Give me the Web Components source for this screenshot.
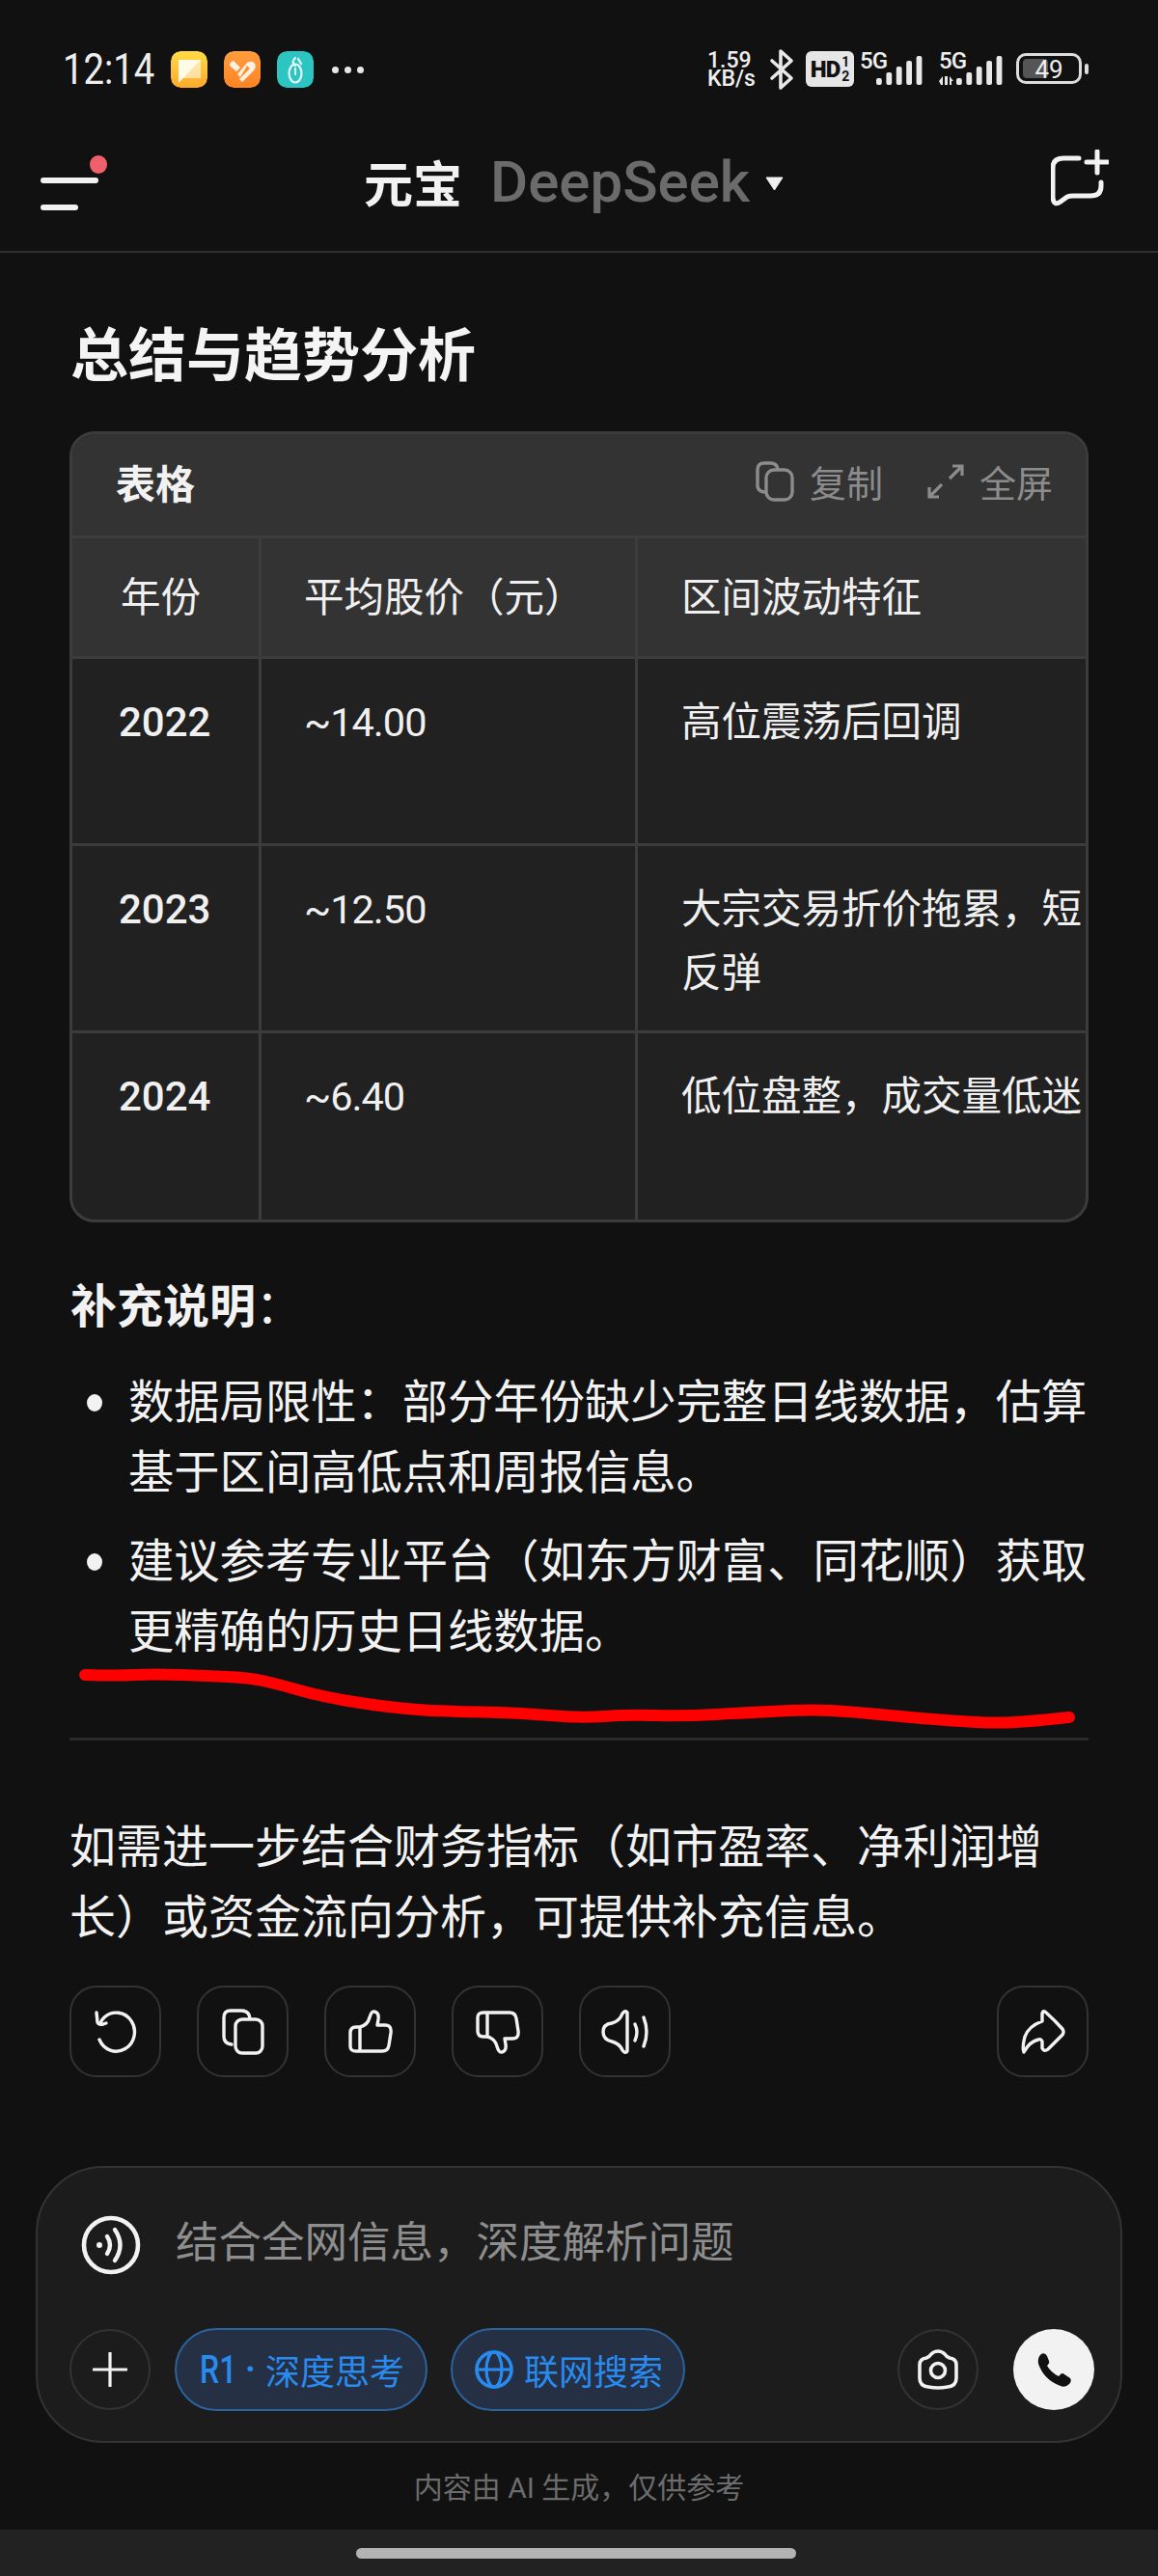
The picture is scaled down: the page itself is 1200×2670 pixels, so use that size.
<!DOCTYPE html>
<html lang="zh">
<head>
<meta charset="utf-8">
<title>元宝 DeepSeek</title>
<style>
  html, body { margin: 0; padding: 0; background: #111; }
  body {
    width: 1200px; height: 2670px; overflow: hidden; position: relative;
    font-family: Roboto, "Noto Sans CJK SC", sans-serif; color: #f2f2f2;
  }
  yb-main { display: block; }
</style>
</head>
<body>
<yb-status-bar></yb-status-bar>
<yb-top-nav></yb-top-nav>
<yb-main>
  <yb-heading>总结与趋势分析</yb-heading>
  <yb-data-table></yb-data-table>
  <yb-note-title><b>补充说明</b>：</yb-note-title>
  <yb-bullet>数据局限性：部分年份缺少完整日线数据，估算基于区间高低点和周报信息。</yb-bullet>
  <yb-bullet>建议参考专业平台（如东方财富、同花顺）获取更精确的历史日线数据。</yb-bullet>
  <yb-divider></yb-divider>
  <yb-para>如需进一步结合财务指标（如市盈率、净利润增长）或资金流向分析，可提供补充信息。</yb-para>
  <yb-actions></yb-actions>
</yb-main>
<yb-composer></yb-composer>
<yb-home-bar></yb-home-bar>
<yb-scribble></yb-scribble>

<script>
const FONT = 'Roboto, "Noto Sans CJK SC", sans-serif';

class YbElement extends HTMLElement {
  constructor() {
    super();
    this.attachShadow({ mode: 'open' });
  }
  render(css, html) {
    this.shadowRoot.innerHTML = `<style>${css}</style>${html}`;
  }
}

function bars(x0) {
  const hs = [7, 13, 19, 25, 30];
  return hs.map((h, i) => `<rect x="${x0 + i * 10.4}" y="${31 - h}" width="5.8" height="${h}" rx="2" fill="#e8e8e8"/>`).join('');
}

class YbStatusBar extends YbElement {
  connectedCallback() {
    this.render(`
      :host { display: flex; height: 124px; box-sizing: border-box; padding: 53px 72px 0 65px; justify-content: space-between; color: #eee; font-family: ${FONT}; }
      .left, .right { display: flex; align-items: flex-start; }
      .time { font-size: 44px; line-height: 38px; width: 92px; transform: scaleX(.87); transform-origin: left; white-space: nowrap; }
      .app { width: 38px; height: 38px; border-radius: 10px; margin-left: 17px; display: block; }
      .app.first { margin-left: 20px; }
      .dots { display: flex; gap: 6px; margin: 16px 0 0 19px; }
      .dots i { width: 7px; height: 7px; border-radius: 50%; background: #e8e8e8; }
      .speed { font-size: 23px; font-weight: 500; line-height: 19px; width: 54px; white-space: pre-line; }
      .bt { display: block; margin: -3px 0 0 10px; }
      .hd { margin-left: 12px; width: 50px; height: 37px; border-radius: 6px; background: #e6e6e6; color: #111; display: flex; align-items: center; justify-content: center; font-weight: 900; font-size: 24px; letter-spacing: -1px; }
      .hd small { font-size: 14px; line-height: 15px; display: block; text-align: center; margin-left: 2px; font-weight: 700; letter-spacing: 0; }
      .sig { position: relative; width: 66px; height: 37px; margin-left: 6px; }
      .sig.b { margin-left: 16px; }
      .sig b { position: absolute; left: 0; top: 0; font-size: 24px; line-height: 20px; font-weight: 500; letter-spacing: -1px; }
      .sig svg { position: absolute; left: 0; top: 4px; display: block; }
      .bat { position: relative; margin: 2px 0 0 14px; width: 68px; height: 32px; box-sizing: border-box; border: 3px solid #ddd; border-radius: 10px; }
      .bat i { position: absolute; left: 4px; top: 3px; bottom: 3px; width: 26px; background: #555; border-radius: 4px; }
      .bat span { position: absolute; left: 0; right: 0; top: -2px; text-align: center; font-size: 26px; line-height: 32px; }
      .tip { width: 4px; height: 11px; margin: 13px 0 0 3px; background: #ddd; border-radius: 2px; }
    `, `
      <div class="left">
        <div class="time">12:14</div>
        <svg class="app first" viewBox="0 0 38 38"><defs><linearGradient id="y" x1="0" y1="0" x2="0" y2="1"><stop offset="0" stop-color="#ffdb45"/><stop offset="1" stop-color="#ffa92c"/></linearGradient></defs><rect width="38" height="38" rx="10" fill="url(#y)"/><rect x="8" y="9" width="23" height="19" fill="#fff" opacity=".55"/><path d="M8 9h23L8 33z" fill="#fffbe6"/></svg>
        <svg class="app" viewBox="0 0 38 38"><defs><linearGradient id="o" x1="0" y1="0" x2="0" y2="1"><stop offset="0" stop-color="#ff9d3e"/><stop offset="1" stop-color="#ff8424"/></linearGradient></defs><rect width="38" height="38" rx="10" fill="url(#o)"/><path d="M6 15Q6 11 10 10L17 17 13 21zM14 24L24 12Q29 9 32 13Q34 16 31 20L19 32 16 29 27 18 24 15 17 27z" fill="#fff2e2"/></svg>
        <svg class="app" viewBox="0 0 38 38"><rect width="38" height="38" rx="10" fill="#2cc5c2"/><ellipse cx="19" cy="23" rx="6.5" ry="9.5" fill="none" stroke="#e8fbfa" stroke-width="2.2"/><path d="M19 15c-4-3-2-6 0-8M19 18v6M22 8l3 5" fill="none" stroke="#e8fbfa" stroke-width="2.2" stroke-linecap="round"/></svg>
        <div class="dots"><i></i><i></i><i></i></div>
      </div>
      <div class="right">
        <div class="speed">1.59
KB/s</div>
        <svg class="bt" width="26" height="44" viewBox="0 0 26 44"><path d="M3 13L23 31 12 41V3L23 13 3 31" fill="none" stroke="#e8e8e8" stroke-width="3.6" stroke-linejoin="round" stroke-linecap="round"/></svg>
        <div class="hd">HD<small>1<br>2</small></div>
        <div class="sig"><b>5G</b><svg width="66" height="33" viewBox="0 0 66 33">${bars(17)}</svg></div>
        <div class="sig b"><b>5G</b><svg width="70" height="33" viewBox="0 0 70 33"><path d="M0 27l4-5v9H2zM6 22h3v9H6zM11 22l4 5h-2v4h-2z" fill="#e8e8e8"/>${bars(18)}</svg></div>
        <div class="bat"><i></i><span>49</span></div>
        <div class="tip"></div>
      </div>
    `);
  }
}

class YbTopNav extends YbElement {
  connectedCallback() {
    this.render(`
      :host { display: block; position: relative; height: 138px; box-sizing: border-box; border-bottom: 2px solid #2e2e2e; font-family: ${FONT}; }
      .bar { display: flex; align-items: center; height: 136px; padding: 0 51px 8px 42px; box-sizing: border-box; }
      .menu { position: relative; width: 70px; height: 40px; }
      .menu i { position: absolute; left: 0; height: 6px; border-radius: 3px; background: #f2f2f2; }
      .menu .a { top: 16px; width: 60px; }
      .menu .b { top: 44px; width: 39px; }
      .menu .dot { position: absolute; left: 51px; top: -7px; width: 18px; height: 19px; border-radius: 50%; background: #f0606a; }
      .title { position: absolute; left: 377px; top: 22px; display: flex; align-items: center; height: 84px; white-space: nowrap; }
      .title b { font-size: 51px; color: #f2f2f2; font-weight: 700; }
      .title span { font-size: 60px; color: #6b6b6b; font-weight: 500; margin-left: 29px; }
      .caret { margin: 4px 0 0 16px; display: block; }
      .new { margin-left: auto; display: block; margin-top: -6px; }
    `, `
      <div class="bar">
        <div class="menu"><i class="a"></i><i class="b"></i><div class="dot"></div></div>
        <div class="title"><b>元宝</b><span>DeepSeek</span><svg class="caret" width="19" height="15" viewBox="0 0 19 15"><path d="M1 1h17L9.5 14z" fill="#f0f0f0" stroke="#f0f0f0" stroke-linejoin="round"/></svg></div>
        <svg class="new" width="60" height="60" viewBox="0 0 60 60"><path d="M29 9H13Q2 9 2 19V50Q3 59 10 54L17 49Q19 48 23 48H41Q52 48 52 38V34" fill="none" stroke="#f2f2f2" stroke-width="5" stroke-linecap="round"/><path d="M48 2V24M37 13H59" fill="none" stroke="#f2f2f2" stroke-width="5" stroke-linecap="round"/></svg>
      </div>
    `);
  }
}

class YbHeading extends YbElement {
  connectedCallback() {
    this.render(`:host { display: block; margin: 68px 72px 37px 73px; font-size: 60px; line-height: 80px; font-weight: 700; color: #f4f4f4; font-family: ${FONT}; }`, `<slot></slot>`);
  }
}

class YbDataTable extends YbElement {
  connectedCallback() {
    // the third column runs past the card's edge in the source: only what shows is kept
    const rows = [
      ['2022', '~14.00', '高位震荡后回调'],
      ['2023', '~12.50', '大宗交易折价拖累，短<br>反弹'],
      ['2024', '~6.40', '低位盘整，成交量低迷'],
    ];
    const body = rows.map((r, i) => `
      <div class="cell y ${i === 2 ? 'last' : ''}">${r[0]}</div>
      <div class="cell p ${i === 2 ? 'last' : ''}">${r[1]}</div>
      <div class="cell t ${i === 2 ? 'last' : ''}">${r[2]}</div>`).join('');
    this.render(`
      :host { display: block; margin: 0 72px; height: 820px; box-sizing: border-box; border: 3px solid #3c3c3c; border-radius: 26px; overflow: hidden; background: #212121; font-family: ${FONT}; }
      .head { display: flex; align-items: center; height: 108px; box-sizing: border-box; border-bottom: 3px solid #3c3c3c; background: #333; padding: 0 34px 8px 45px; }
      .head b { font-size: 41px; font-weight: 700; color: #f2f2f2; flex: 1; }
      .tool { display: flex; align-items: center; gap: 16px; color: #8c8c8c; font-size: 38px; margin-left: 46px; }
      .tool svg { display: block; }
      .grid { display: grid; grid-template-columns: 196px 390px 464px; width: 1050px; }
      .cell { box-sizing: border-box; font-size: 41.5px; line-height: 66px; height: 194px; padding: 33px 0 0; border-right: 3px solid #3c3c3c; border-bottom: 3px solid #3c3c3c; color: #f0f0f0; }
      .cell.t { border-right: 0; padding-left: 45px; white-space: nowrap; }
      .cell.y { padding-left: 48px; font-weight: 500; font-size: 42px; }
      .cell.p { padding-left: 44px; letter-spacing: -1px; }
      .cell.h { height: 125px; background: #333; padding-top: 29px; font-weight: 400; font-size: 41.5px; letter-spacing: 0; }
      .cell.last { border-bottom: 0; height: 194px; }
    `, `
      <div class="head">
        <b>表格</b>
        <div class="tool">
          <svg width="40" height="42" viewBox="0 0 40 42"><path d="M9 32Q2 31 2 25V9Q2 2 9 2H15Q22 2 23 8" fill="none" stroke="#8c8c8c" stroke-width="3.4" stroke-linecap="round"/><rect x="11" y="9" width="27" height="31" rx="8" fill="none" stroke="#8c8c8c" stroke-width="3.4"/></svg>
          <span>复制</span>
        </div>
        <div class="tool">
          <svg width="38" height="36" viewBox="0 0 38 36"><path d="M36 2L23 15M26 2H36V12M2 34L15 21M2 24V34H12" fill="none" stroke="#8c8c8c" stroke-width="3.2"/></svg>
          <span>全屏</span>
        </div>
      </div>
      <div class="grid">
        <div class="cell h y" style="padding-left:50px">年份</div>
        <div class="cell h p">平均股价（元）</div>
        <div class="cell h t">区间波动特征</div>
        ${body}
      </div>
    `);
  }
}

class YbNoteTitle extends YbElement {
  connectedCallback() {
    this.render(`:host { display: block; margin: 51px 72px 26px 73px; font-size: 48px; line-height: 74px; font-family: ${FONT}; }`, `<slot></slot>`);
  }
}

class YbBullet extends YbElement {
  connectedCallback() {
    this.render(`
      :host { display: flex; margin: 0 70px 19px 90px; font-size: 47.3px; line-height: 73px; color: #f2f2f2; font-family: ${FONT}; }
      i { flex: none; width: 16px; height: 18px; border-radius: 50%; background: #f2f2f2; margin: 27px 27px 0 0; }
      div { flex: 1; min-width: 0; }
    `, `<i></i><div><slot></slot></div>`);
  }
}

class YbDivider extends YbElement {
  connectedCallback() {
    this.render(`:host { display: block; height: 3px; margin: 72px 72px 74px; background: #2a2a2a; }`, ``);
  }
}

class YbPara extends YbElement {
  connectedCallback() {
    this.render(`:host { display: block; margin: 0 72px 0 72px; font-size: 48px; line-height: 73px; color: #f2f2f2; font-family: ${FONT}; }`, `<slot></slot>`);
  }
}

class YbIconButton extends YbElement {
  connectedCallback() {
    this.render(`
      :host { display: flex; align-items: center; justify-content: center; width: 95px; height: 95px; box-sizing: border-box; border: 2px solid #333; border-radius: 28px; flex: none; }
    `, `<slot></slot>`);
  }
}

const S = 'fill="none" stroke="#f2f2f2" stroke-width="3.4" stroke-linecap="round" stroke-linejoin="round"';
const THUMB = 'M12 18Q20 16 22 8Q24 1 27 2Q32 3 31 10L30 16H38Q45 16 44 24L42 37Q41 43 35 43H8Q2 43 2 38V24Q2 18 8 18H12V43';

class YbActions extends YbElement {
  connectedCallback() {
    this.render(`
      :host { display: flex; gap: 37px; margin: 34px 72px 0; }
      .sp { flex: 1; }
      svg { display: block; }
    `, `
      <yb-icon-button><svg width="46" height="46" viewBox="0 0 46 46"><path d="M6 31A19 20 0 1 0 11 8Q8 11 7 14" ${S}/><path d="M3 3L4 13Q5 16 10 15L13 14" ${S}/></svg></yb-icon-button>
      <yb-icon-button><svg width="44" height="48" viewBox="0 0 44 48"><path d="M10 37Q2 36 2 29V9Q2 2 9 2H20Q28 2 29 10" ${S}/><rect x="14" y="11" width="28" height="35" rx="7" ${S}/></svg></yb-icon-button>
      <yb-icon-button><svg width="46" height="46" viewBox="0 0 46 46"><path d="${THUMB}" ${S}/></svg></yb-icon-button>
      <yb-icon-button><svg width="46" height="46" viewBox="0 0 46 46"><g transform="translate(0 46) scale(1 -1)"><path d="${THUMB}" ${S}/></g></svg></yb-icon-button>
      <yb-icon-button><svg width="50" height="48" viewBox="0 0 50 48"><path d="M27 4Q25 1 22 5Q19 13 11 15Q2 16 2 24Q2 32 11 34Q19 36 22 43Q25 47 27 44Z" ${S}/><path d="M35 16Q39 24 35 33M44 9Q50 24 44 39" ${S} stroke-width="3"/></svg></yb-icon-button>
      <div class="sp"></div>
      <yb-icon-button><svg width="46" height="46" viewBox="0 0 46 46"><path d="M22 12V4Q23 0 26 3Q35 11 43 20Q45 23 43 26L28 41Q24 44 22 40V33Q21 30 18 31Q9 33 3 44Q1 40 4 28Q8 17 22 12Z" ${S}/></svg></yb-icon-button>
    `);
  }
}

class YbPill extends YbElement {
  connectedCallback() {
    this.render(`
      :host { display: inline-flex; align-items: center; height: 86px; box-sizing: border-box; border: 2px solid #2b639f; border-radius: 43px; background: #253044; color: #2a8bef; font-size: 36px; white-space: nowrap; font-family: ${FONT}; }
    `, `<slot></slot>`);
  }
}

class YbRound extends YbElement {
  connectedCallback() {
    this.render(`
      :host { display: flex; align-items: center; justify-content: center; width: 84px; height: 84px; box-sizing: border-box; border-radius: 50%; border: 2px solid #333; flex: none; }
      :host([solid]) { background: #f2f2f2; border: 0; }
    `, `<slot></slot>`);
  }
}

class YbComposer extends YbElement {
  connectedCallback() {
    this.render(`
      :host { display: block; margin: 92px 37px 0; height: 287px; box-sizing: border-box; border: 2px solid #333; border-radius: 70px; background: #1c1c1c; font-family: ${FONT}; }
      .top { display: flex; align-items: center; height: 166px; padding: 0 0 0 45px; }
      .top svg { display: block; margin-bottom: 6px; }
      .ph { margin-left: 36px; padding-bottom: 20px; font-size: 44.5px; color: #8e8e8e; white-space: nowrap; }
      .row { display: flex; align-items: center; padding: 0 27px 0 33px; }
      .r1 { width: 262px; padding-left: 24px; }
      .r1 b { display: inline-block; width: 37px; font-size: 40px; font-weight: 500; transform: scaleX(.8); transform-origin: left; }
      .r1 i { font-style: normal; font-weight: 700; width: 31px; text-align: center; }
      .web { width: 243px; padding-left: 23px; margin-left: 24px; }
      .web svg { display: block; margin-right: 11px; }
      .sp { flex: 1; }
      yb-round svg { display: block; }
      .cam { margin-right: 36px; }
    `, `
      <div class="top">
        <svg width="62" height="62" viewBox="0 0 62 62"><ellipse cx="31" cy="31" rx="28" ry="28" fill="none" stroke="#f2f2f2" stroke-width="4.6"/><circle cx="19" cy="31" r="3" fill="#f2f2f2"/><path d="M27 22Q33 31 27 40M35 15Q46 31 35 47" fill="none" stroke="#f2f2f2" stroke-width="4.4" stroke-linecap="round"/></svg>
        <div class="ph">结合全网信息，深度解析问题</div>
      </div>
      <div class="row">
        <yb-round><svg width="36" height="36" viewBox="0 0 36 36"><path d="M18 1V35M1 18H35" stroke="#f2f2f2" stroke-width="3.2" stroke-linecap="round"/></svg></yb-round>
        <yb-pill class="r1" style="margin-left:25px"><b>R1</b><i>·</i>深度思考</yb-pill>
        <yb-pill class="web"><svg width="40" height="40" viewBox="0 0 40 40"><circle cx="20" cy="20" r="18" fill="none" stroke="#2a8bef" stroke-width="3.6"/><ellipse cx="20" cy="20" rx="8" ry="18" fill="none" stroke="#2a8bef" stroke-width="3.2"/><path d="M2 20H38" stroke="#2a8bef" stroke-width="3.2"/></svg>联网搜索</yb-pill>
        <div class="sp"></div>
        <yb-round class="cam"><svg width="44" height="42" viewBox="0 0 44 42"><path d="M3 16Q3 10 10 9Q13 8 15 5Q18 2 22 2Q26 2 29 5Q31 8 34 9Q41 10 41 16V30Q41 38 32 39Q22 41 12 39Q3 38 3 30Z" fill="none" stroke="#f2f2f2" stroke-width="3.6"/><circle cx="22" cy="22" r="7.5" fill="none" stroke="#f2f2f2" stroke-width="3.6"/></svg></yb-round>
        <yb-round solid><svg width="37" height="37" viewBox="0 0 37 37"><path d="M5 2Q9 0 11 4L13 9Q14 11 12 13L11 14Q15 21 23 25L25 23Q27 21 29 23L35 27Q37 30 34 33Q30 37 25 35Q8 29 2 12Q1 5 5 2Z" fill="#111"/></svg></yb-round>
      </div>
    `);
  }
}

class YbHomeBar extends YbElement {
  connectedCallback() {
    this.render(`
      :host { display: block; font-family: ${FONT}; }
      .note { height: 90px; text-align: center; font-size: 30px; line-height: 93px; color: #6c6c6c; }
      .bar { height: 48px; background: #222; display: flex; justify-content: center; padding: 19px 6px 0 0; box-sizing: border-box; }
      .bar i { width: 456px; height: 11px; border-radius: 6px; background: #b3b3b3; }
    `, `<div class="note">内容由 AI 生成，仅供参考</div><div class="bar"><i></i></div>`);
  }
}

class YbScribble extends YbElement {
  connectedCallback() {
    // hand-drawn red line, smoothed through the midpoints of these samples
    const pts = [[88,1736],[121,1737],[159,1735],[215,1737],[258,1739],[286,1745],[335,1759],[405,1770],[461,1774],[538,1775],[601,1781],[650,1777],[707,1779],[777,1775],[840,1772],[882,1774],[952,1781],[1022,1786],[1058,1785],[1108,1780]];
    let d = `M${pts[0][0]} ${pts[0][1]}`;
    for (let i = 1; i < pts.length - 1; i++) {
      const mx = (pts[i][0] + pts[i + 1][0]) / 2, my = (pts[i][1] + pts[i + 1][1]) / 2;
      d += `Q${pts[i][0]} ${pts[i][1]} ${mx} ${my}`;
    }
    d += `L${pts[pts.length - 1][0]} ${pts[pts.length - 1][1]}`;
    this.render(`
      :host { position: absolute; left: 0; top: 0; width: 1200px; height: 2670px; pointer-events: none; }
      svg { position: absolute; left: 0; top: 0; }
    `, `<svg width="1200" height="2670" viewBox="0 0 1200 2670"><path d="${d}" fill="none" stroke="#ff0000" stroke-width="12" stroke-linecap="round" stroke-linejoin="round"/></svg>`);
  }
}

customElements.define('yb-status-bar', YbStatusBar);
customElements.define('yb-top-nav', YbTopNav);
customElements.define('yb-heading', YbHeading);
customElements.define('yb-data-table', YbDataTable);
customElements.define('yb-note-title', YbNoteTitle);
customElements.define('yb-bullet', YbBullet);
customElements.define('yb-divider', YbDivider);
customElements.define('yb-para', YbPara);
customElements.define('yb-icon-button', YbIconButton);
customElements.define('yb-actions', YbActions);
customElements.define('yb-pill', YbPill);
customElements.define('yb-round', YbRound);
customElements.define('yb-composer', YbComposer);
customElements.define('yb-home-bar', YbHomeBar);
customElements.define('yb-scribble', YbScribble);
</script>
</body>
</html>
